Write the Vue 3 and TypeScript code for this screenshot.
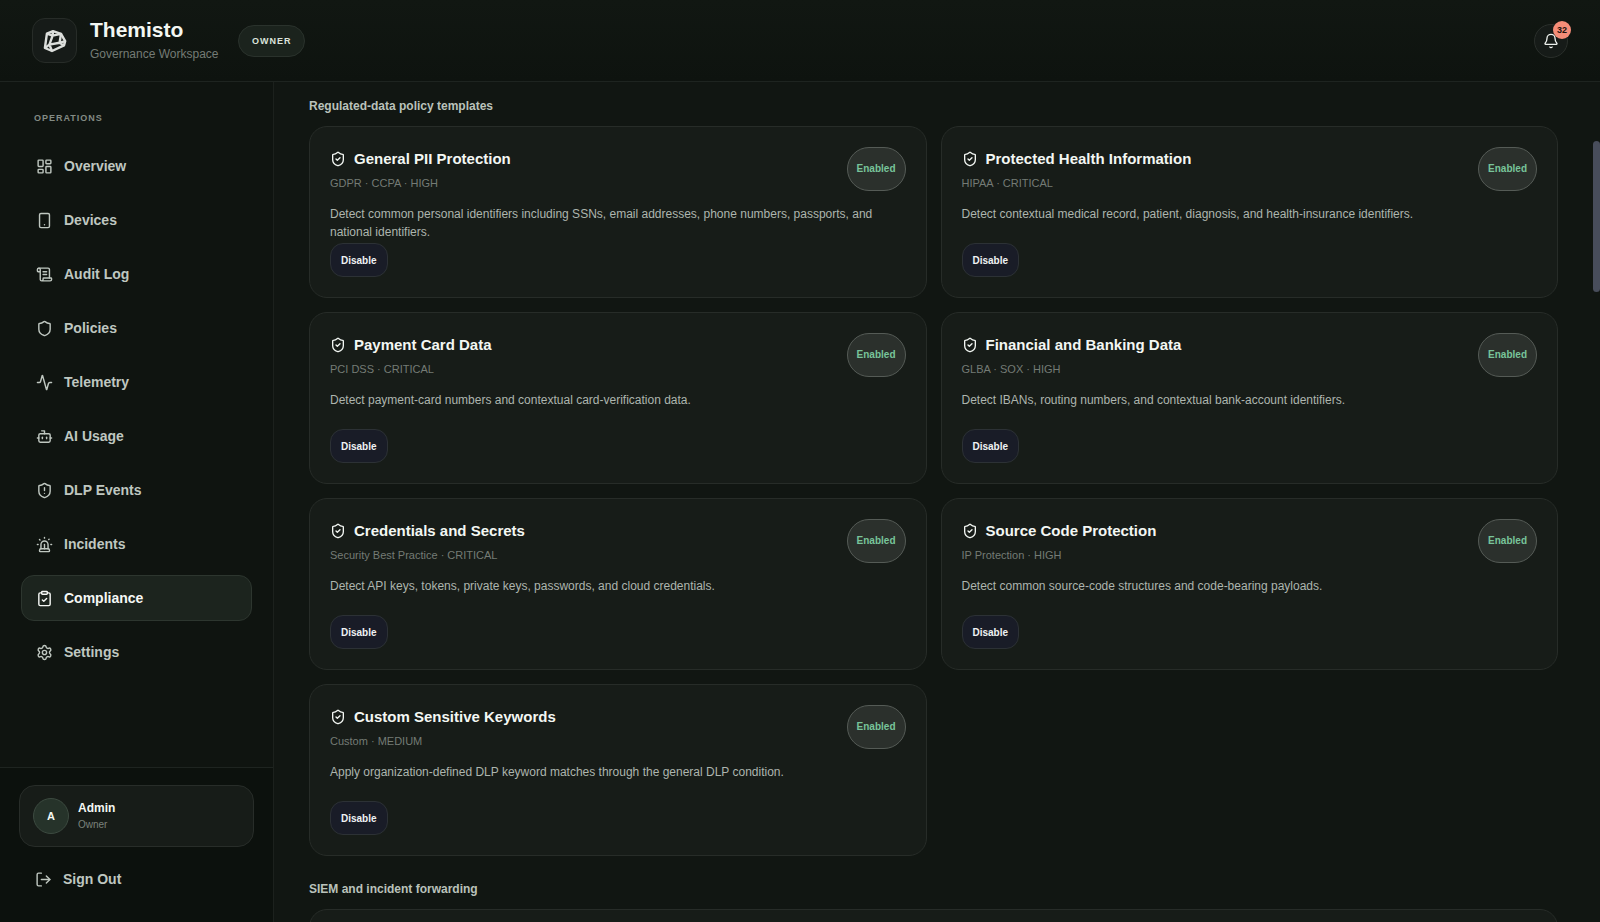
<script setup lang="ts">
import { ref } from 'vue'

interface NavItem {
  label: string
  paths: string[]
}

interface Template {
  title: string
  meta: string
  description: string
}

const shield =
  'M20 13c0 5-3.5 7.5-7.66 8.95a1 1 0 0 1-.67-.01C7.5 20.5 4 18 4 13V6a1 1 0 0 1 1-1c2 0 4.5-1.2 6.24-2.72a1.17 1.17 0 0 1 1.52 0C14.51 3.81 17 5 19 5a1 1 0 0 1 1 1z'

const navItems: NavItem[] = [
  { label: 'Overview', paths: ['M4 3h5a1 1 0 0 1 1 1v7a1 1 0 0 1-1 1H4a1 1 0 0 1-1-1V4a1 1 0 0 1 1-1z', 'M15 3h5a1 1 0 0 1 1 1v3a1 1 0 0 1-1 1h-5a1 1 0 0 1-1-1V4a1 1 0 0 1 1-1z', 'M15 12h5a1 1 0 0 1 1 1v7a1 1 0 0 1-1 1h-5a1 1 0 0 1-1-1v-7a1 1 0 0 1 1-1z', 'M4 16h5a1 1 0 0 1 1 1v3a1 1 0 0 1-1 1H4a1 1 0 0 1-1-1v-3a1 1 0 0 1 1-1z'] },
  { label: 'Devices', paths: ['M7 2h10a2 2 0 0 1 2 2v16a2 2 0 0 1-2 2H7a2 2 0 0 1-2-2V4a2 2 0 0 1 2-2z', 'M12 18h.01'] },
  { label: 'Audit Log', paths: ['M15 12h-5', 'M15 8h-5', 'M19 17V5a2 2 0 0 0-2-2H4', 'M8 21h12a2 2 0 0 0 2-2v-1a1 1 0 0 0-1-1H11a1 1 0 0 0-1 1v1a2 2 0 1 1-4 0V5a2 2 0 1 0-4 0v2a1 1 0 0 0 1 1h3'] },
  { label: 'Policies', paths: [shield] },
  { label: 'Telemetry', paths: ['M22 12h-2.48a2 2 0 0 0-1.93 1.46l-2.35 8.36a.25.25 0 0 1-.48 0L9.24 2.18a.25.25 0 0 0-.48 0l-2.35 8.36A2 2 0 0 1 4.49 12H2'] },
  { label: 'AI Usage', paths: ['M12 8V4H8', 'M6 8h12a2 2 0 0 1 2 2v8a2 2 0 0 1-2 2H6a2 2 0 0 1-2-2v-8a2 2 0 0 1 2-2z', 'M2 14h2', 'M20 14h2', 'M15 13v2', 'M9 13v2'] },
  { label: 'DLP Events', paths: [shield, 'M12 8v4', 'M12 16h.01'] },
  { label: 'Incidents', paths: ['M7 18v-6a5 5 0 1 1 10 0v6', 'M5 21a1 1 0 0 0 1 1h12a1 1 0 0 0 1-1v-1a2 2 0 0 0-2-2H7a2 2 0 0 0-2 2z', 'M21 12h1', 'M18.5 4.5 18 5', 'M2 12h1', 'M12 2v1', 'm4.929 4.929.707.707', 'M12 12v6'] },
  { label: 'Compliance', paths: ['M9 2h6a1 1 0 0 1 1 1v2a1 1 0 0 1-1 1H9a1 1 0 0 1-1-1V3a1 1 0 0 1 1-1z', 'M16 4h2a2 2 0 0 1 2 2v14a2 2 0 0 1-2 2H6a2 2 0 0 1-2-2V6a2 2 0 0 1 2-2h2', 'm9 14 2 2 4-4'] },
  { label: 'Settings', paths: ['M9.671 4.136a2.34 2.34 0 0 1 4.659 0 2.34 2.34 0 0 0 3.319 1.915 2.34 2.34 0 0 1 2.33 4.033 2.34 2.34 0 0 0 0 3.831 2.34 2.34 0 0 1-2.33 4.033 2.34 2.34 0 0 0-3.319 1.915 2.34 2.34 0 0 1-4.659 0 2.34 2.34 0 0 0-3.32-1.915 2.34 2.34 0 0 1-2.33-4.033 2.34 2.34 0 0 0 0-3.831A2.34 2.34 0 0 1 6.35 6.051a2.34 2.34 0 0 0 3.319-1.915', 'M15 12a3 3 0 1 1-6 0 3 3 0 0 1 6 0z'] },
]

const templates: Template[] = [
  { title: 'General PII Protection', meta: 'GDPR · CCPA · HIGH', description: 'Detect common personal identifiers including SSNs, email addresses, phone numbers, passports, and national identifiers.' },
  { title: 'Protected Health Information', meta: 'HIPAA · CRITICAL', description: 'Detect contextual medical record, patient, diagnosis, and health-insurance identifiers.' },
  { title: 'Payment Card Data', meta: 'PCI DSS · CRITICAL', description: 'Detect payment-card numbers and contextual card-verification data.' },
  { title: 'Financial and Banking Data', meta: 'GLBA · SOX · HIGH', description: 'Detect IBANs, routing numbers, and contextual bank-account identifiers.' },
  { title: 'Credentials and Secrets', meta: 'Security Best Practice · CRITICAL', description: 'Detect API keys, tokens, private keys, passwords, and cloud credentials.' },
  { title: 'Source Code Protection', meta: 'IP Protection · HIGH', description: 'Detect common source-code structures and code-bearing payloads.' },
  { title: 'Custom Sensitive Keywords', meta: 'Custom · MEDIUM', description: 'Apply organization-defined DLP keyword matches through the general DLP condition.' },
]

const active = ref('Compliance')
</script>

<template>
  <div class="app">
    <header class="topbar">
      <div class="logo">
        <svg viewBox="0 0 24 24" width="24" height="24" aria-hidden="true">
          <path d="M10 2.2 18 4.9 22.2 12.2 21 16.4 9 22 1.9 19 3.9 4.6z" />
          <path d="M10 2.2 9.6 6.6 3.9 4.6M18 4.9 9.6 6.6 6.4 15.6 16.6 13.8zM6.4 15.6 1.9 19M6.4 15.6 9 22M16.6 13.8 21 16.4M16.6 13.8 22.2 12.2" />
        </svg>
      </div>
      <div class="brand">
        <div class="brand-name">Themisto</div>
        <div class="brand-sub">Governance Workspace</div>
      </div>
      <span class="role">OWNER</span>
      <button class="bell" type="button" aria-label="Notifications, 32 unread">
        <svg class="icon" viewBox="0 0 24 24" width="16" height="16" aria-hidden="true">
          <path d="M10.268 21a2 2 0 0 0 3.464 0" />
          <path d="M3.262 15.326A1 1 0 0 0 4 17h16a1 1 0 0 0 .74-1.673C19.41 13.956 18 12.499 18 8A6 6 0 0 0 6 8c0 4.499-1.411 5.956-2.738 7.326" />
        </svg>
        <span class="count">32</span>
      </button>
    </header>

    <div class="body">
      <aside class="sidebar">
        <nav class="nav" aria-label="Operations">
          <div class="nav-title">OPERATIONS</div>
          <a
            v-for="item in navItems"
            :key="item.label"
            href="#"
            class="nav-item"
            :class="{ active: item.label === active }"
            @click.prevent="active = item.label"
          >
            <svg class="icon" viewBox="0 0 24 24" width="17" height="17" aria-hidden="true">
              <path v-for="d in item.paths" :key="d" :d="d" />
            </svg>
            <span>{{ item.label }}</span>
          </a>
        </nav>
        <div class="account">
          <div class="user">
            <span class="avatar">A</span>
            <div class="who">
              <div class="who-name">Admin</div>
              <div class="who-role">Owner</div>
            </div>
          </div>
          <button class="signout" type="button">
            <svg class="icon" viewBox="0 0 24 24" width="17" height="17" aria-hidden="true">
              <path d="m16 17 5-5-5-5" />
              <path d="M21 12H9" />
              <path d="M9 21H5a2 2 0 0 1-2-2V5a2 2 0 0 1 2-2h4" />
            </svg>
            <span>Sign Out</span>
          </button>
        </div>
      </aside>

      <main class="content">
        <h2 class="section-title">Regulated-data policy templates</h2>
        <div class="grid">
          <article v-for="t in templates" :key="t.title" class="card">
            <div class="card-head">
              <div>
                <h3 class="card-title">
                  <svg class="icon" viewBox="0 0 24 24" width="16" height="16" aria-hidden="true">
                    <path :d="shield" />
                    <path d="m9 12 2 2 4-4" />
                  </svg>
                  <span>{{ t.title }}</span>
                </h3>
                <div class="meta">{{ t.meta }}</div>
              </div>
              <span class="status">Enabled</span>
            </div>
            <p class="desc">{{ t.description }}</p>
            <button class="disable" type="button">Disable</button>
          </article>
        </div>
        <h2 class="section-title">SIEM and incident forwarding</h2>
        <div class="card next"></div>
        <div class="thumb"></div>
      </main>
    </div>
  </div>
</template>

<style>
body {
  background: #101511;
}
</style>

<style scoped>
.app {
  display: flex;
  flex-direction: column;
  height: 100vh;
  overflow: hidden;
  box-sizing: border-box;
  background: #111612;
  color: #f3f7f3;
  font-family: "Liberation Sans", Arial, Helvetica, sans-serif;
}

.app * {
  box-sizing: border-box;
}

.icon {
  flex: none;
  fill: none;
  stroke: currentColor;
  stroke-width: 2;
  stroke-linecap: round;
  stroke-linejoin: round;
}

button {
  font-family: inherit;
  cursor: pointer;
}

.topbar {
  flex: none;
  display: flex;
  align-items: center;
  height: 82px;
  padding: 0 32px;
  border-bottom: 1px solid #1e2420;
  background: linear-gradient(180deg, #111712, #0e130f);
}

.logo {
  display: grid;
  place-items: center;
  width: 45px;
  height: 45px;
  border: 1px solid #272c28;
  border-radius: 13px;
  background: #161b18;
}

.logo svg {
  fill: none;
  stroke: #dcdfdc;
  stroke-width: 2.4;
  stroke-linejoin: round;
}

.brand {
  width: 135px;
  margin: 0 13px;
  padding-top: 1px;
  white-space: nowrap;
}

.brand-name {
  font-size: 21px;
  font-weight: 700;
  line-height: 26px;
}

.brand-sub {
  font-size: 12px;
  line-height: 23px;
  color: #747b75;
}

.role {
  padding: 0 12px 0 13px;
  border: 1px solid #2a322c;
  border-radius: 16px;
  background: #1b231d;
  font-size: 9px;
  font-weight: 700;
  line-height: 30px;
  letter-spacing: 1px;
  color: #dbe3db;
}

.bell {
  position: relative;
  display: grid;
  place-items: center;
  width: 34px;
  height: 34px;
  margin-left: auto;
  padding: 0;
  border: 1px solid #2a2f2b;
  border-radius: 50%;
  background: #161b18;
  color: #eef2ee;
}

.count {
  position: absolute;
  top: -4px;
  right: -4px;
  min-width: 18px;
  border-radius: 9px;
  background: #f58d78;
  color: #22120e;
  font-size: 9px;
  font-weight: 700;
  line-height: 18px;
  text-align: center;
}

.body {
  flex: 1;
  display: flex;
  min-height: 0;
}

.sidebar {
  flex: none;
  display: flex;
  flex-direction: column;
  width: 274px;
  border-right: 1px solid #1c211d;
  background: #0f1410;
}

.nav {
  flex: 1;
  display: flex;
  flex-direction: column;
  gap: 8px;
  padding: 27px 21px 0;
}

.nav-title {
  margin-bottom: 8px;
  padding-left: 13px;
  font-size: 9px;
  font-weight: 700;
  line-height: 18px;
  letter-spacing: 1px;
  color: #838b84;
}

.nav-item {
  display: flex;
  align-items: center;
  gap: 11px;
  height: 46px;
  padding: 0 14px;
  border: 1px solid transparent;
  border-radius: 13px;
  color: #bfc7c0;
  font-size: 14px;
  font-weight: 700;
  text-decoration: none;
}

.nav-item.active {
  border-color: #2d362f;
  background: #1c241e;
  color: #f5f8f5;
}

.account {
  height: 155px;
  padding: 17px 19px 0;
  border-top: 1px solid #1e2420;
  background: #0c110d;
}

.user {
  display: flex;
  align-items: center;
  gap: 9px;
  height: 62px;
  padding: 0 13px;
  border: 1px solid #282d29;
  border-radius: 16px;
  background: #171c18;
}

.avatar {
  width: 36px;
  border: 1px solid #3c4a40;
  border-radius: 50%;
  background: #26332a;
  font-size: 11px;
  font-weight: 700;
  line-height: 34px;
  text-align: center;
}

.who-name {
  font-size: 12px;
  font-weight: 700;
  line-height: 17px;
}

.who-role {
  font-size: 10px;
  line-height: 16px;
  color: #7b827c;
}

.signout {
  display: flex;
  align-items: center;
  gap: 11px;
  margin-top: 9px;
  padding: 0 16px;
  height: 46px;
  border: 0;
  background: none;
  color: #bfc7c0;
  font-size: 14px;
  font-weight: 700;
}

.content {
  position: relative;
  flex: 1;
  min-width: 0;
  overflow: hidden;
  padding: 16px 42px 0 35px;
  background: #111612;
}

.section-title {
  margin: 0 0 11px;
  font-size: 12px;
  font-weight: 700;
  line-height: 17px;
  color: #bac2bb;
}

.grid {
  display: grid;
  grid-template-columns: 1fr 1fr;
  gap: 14px;
  margin-bottom: 25px;
}

.card {
  padding: 20px;
  border: 1px solid #272c28;
  border-radius: 18px;
  background: #171c18;
}

.card-head {
  display: flex;
  align-items: flex-start;
  justify-content: space-between;
}

.card-title {
  display: flex;
  align-items: center;
  gap: 8px;
  margin: 0 0 5px;
  font-size: 15px;
  font-weight: 700;
  line-height: 23px;
}

.meta {
  font-size: 11px;
  line-height: 17px;
  color: #747b75;
}

.status {
  padding: 0 9px;
  border: 1px solid #555b56;
  border-radius: 22px;
  background: #2b302c;
  font-size: 10px;
  font-weight: 700;
  line-height: 42px;
  color: #78c49a;
}

.desc {
  min-height: 36px;
  margin: 13px 0 2px;
  font-size: 12px;
  line-height: 18px;
  color: #adb5ae;
}

.disable {
  display: block;
  height: 34px;
  padding: 0 10px;
  border: 1px solid #2c3135;
  border-radius: 13px;
  background: #191c27;
  color: #eff2f3;
  font-size: 10px;
  font-weight: 700;
}

.next {
  height: 160px;
}

.thumb {
  position: absolute;
  top: 7%;
  right: 0;
  width: 7px;
  height: 18%;
  border-radius: 4px;
  background: #484d5b;
}
</style>
